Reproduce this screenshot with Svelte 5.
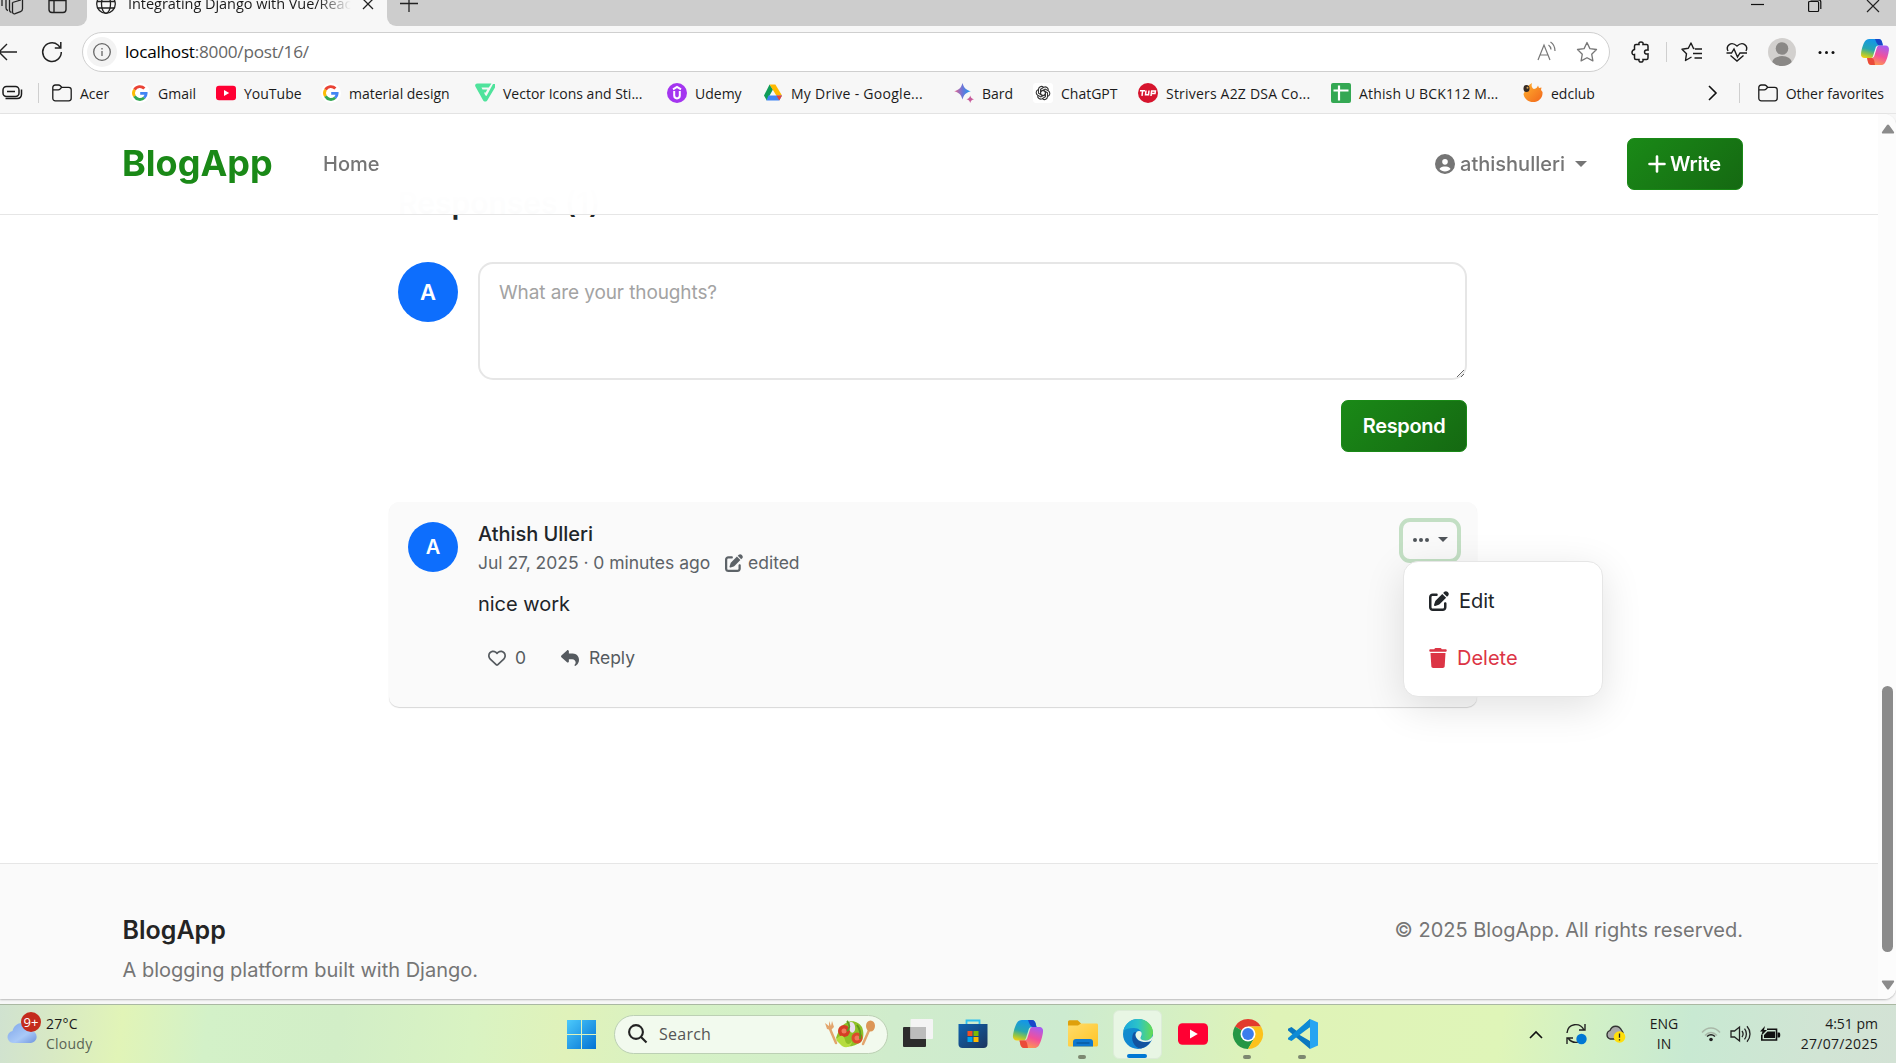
<script>
  const bookmarks = [
    { icon: 'folder', label: 'Acer', width: 78 },
    { icon: 'google', label: 'Gmail', width: 86 },
    { icon: 'youtube', label: 'YouTube', width: 105 },
    { icon: 'google', label: 'material design', width: 154 },
    { icon: 'vector', label: 'Vector Icons and Sti...', width: 192 },
    { icon: 'udemy', label: 'Udemy', width: 96 },
    { icon: 'drive', label: 'My Drive - Google...', width: 191, spacing: 0.28 },
    { icon: 'bard', label: 'Bard', width: 79 },
    { icon: 'chatgpt', label: 'ChatGPT', width: 105 },
    { icon: 'tuf', label: 'Strivers A2Z DSA Co...', width: 193, spacing: 0.2 },
    { icon: 'sheet', label: 'Athish U BCK112 M...', width: 192, spacing: 0.15 },
    { icon: 'edclub', label: 'edclub', width: 90 }
  ];
  const apps = [
    { icon: 'taskview' },
    { icon: 'store' },
    { icon: 'copilot' },
    { icon: 'explorer', open: true },
    { icon: 'edge', open: true, active: true },
    { icon: 'youtube' },
    { icon: 'chrome', open: true },
    { icon: 'vscode', open: true }
  ];
  let draft = $state('');
</script>

{#snippet glyph(name)}
  {#if name === 'folder'}
    <svg class="g" viewBox="0 0 20 20" fill="none" stroke="#1b1b1b" stroke-width="1.3"><path d="M.8 4.6c0-1.500 1-2.600 2.500-2.600h3.200c.8 0 1.300.3 1.800.8l1.400 1.500h7c1.500 0 2.500 1 2.500 2.500v8.500c0 1.500-1 2.500-2.500 2.500H3.300c-1.500 0-2.500-1-2.500-2.500zM.8 6.800h5.500c.8 0 1.300-.3 1.800-.8l1.600-1.700"/></svg>
  {:else if name === 'google'}
    <svg class="g" viewBox="0 0 20 20"><circle cx="10" cy="10" r="10" fill="#fff"/><g fill="none" stroke-width="2.900"><path d="M4.500 6.700A6.200 6.200 0 0 1 14.400 5.600" stroke="#ea4335"/><path d="M4.500 6.700a6.200 6.200 0 0 0 0 6.600" stroke="#fbbc05"/><path d="M4.500 13.300a6.200 6.200 0 0 0 9.700 1.400" stroke="#34a853"/><path d="M14.200 14.700c1.300-1.200 1.900-2.800 1.900-4.300H10.200" stroke="#4285f4"/></g></svg>
  {:else if name === 'youtube'}
    <svg class="g" viewBox="0 0 20 20"><rect y="2.800" width="20" height="14.400" rx="3" fill="#f03"/><path d="M8 7v6l5.200-3z" fill="#fff"/></svg>
  {:else if name === 'vector'}
    <svg class="g" viewBox="0 0 20 20"><path d="M2.500.5h14l-2.700 4H6.500l1 2h4.800l-1.600 3H9l1.200 2.800 1.300.8L18 1h2v3.500L12.500 17c-1 2-3.500 2-4.600 0L.4 3.500C-.4 2 .5.500 2.500.500z" fill="#4fe39c"/></svg>
  {:else if name === 'udemy'}
    <svg class="g" viewBox="0 0 20 20"><circle cx="10" cy="10" r="10" fill="#a435f0"/><path d="M6 6.300 10 4l4 2.300M7.200 8v4.600a2.800 2.800 0 0 0 5.600 0V8" fill="none" stroke="#fff" stroke-width="2"/></svg>
  {:else if name === 'drive'}
    <svg class="g" viewBox="0 0 20 20"><path d="M6.600 1.600 1 12.400l2.800 5L10 6.600z" fill="#0f9d58"/><path d="M6.600 1.600h5.800l6.600 11h-5.700z" fill="#ffba00"/><path d="M5.500 12.500H19l-2.800 4.900H3.500z" fill="#4285f4"/><path d="m13.300 12.500 3 4.900 2.700-4.900z" fill="#ea4335"/></svg>
  {:else if name === 'bard'}
    <svg class="g" viewBox="0 0 20 20"><defs><linearGradient id="bardFill"><stop offset="0" stop-color="#e8668b"/><stop offset=".5" stop-color="#6b75d8"/><stop offset="1" stop-color="#1d9bf0"/></linearGradient></defs><path d="M8.500 0c1.500 5 3.300 6.800 8.300 8.300-5 1.500-6.800 3.300-8.300 8.300-1.500-5-3.300-6.800-8.300-8.300C5.200 6.800 7 5 8.500 0z" fill="url(#bardFill)"/><path d="M16.200 12.600c.7 2.300 1.500 3.100 3.800 3.700-2.300.7-3.100 1.500-3.800 3.700-.6-2.200-1.400-3-3.700-3.700 2.300-.6 3.100-1.400 3.700-3.700z" fill="#c75a9a"/></svg>
  {:else if name === 'chatgpt'}
    <svg class="g" viewBox="0 0 20 20"><rect width="20" height="20" rx="3" fill="#fff"/><g fill="none" stroke="#333" stroke-width="1.100">{#each [0, 60, 120, 180, 240, 300] as a}<path transform="rotate({a} 10 10)" d="M7.600 11.400V6.200L10.800 4.300c2.200-1.200 4.800.6 4.500 3M7.600 8.600 10 7.200"/>{/each}</g></svg>
  {:else if name === 'tuf'}
    <svg class="g" viewBox="0 0 20 20"><circle cx="10" cy="10" r="10" fill="#d6142d"/><path d="M2 7.800h5M4.600 7.800 4 12.800M8 7.500l-.5 4.200h3l.5-4.200M13 13l.6-5h3.800l-.4 2.500h-3.600" fill="none" stroke="#fff" stroke-width="1.500"/></svg>
  {:else if name === 'sheet'}
    <svg class="g" viewBox="0 0 20 20"><rect width="20" height="20" rx="2" fill="#34a853"/><path d="M2.500 7.500h15M8 2.500v15" stroke="#fff" stroke-width="2.200"/></svg>
  {:else if name === 'edclub'}
    <svg class="g" viewBox="0 0 20 20"><defs><linearGradient id="edFill" y2="1"><stop offset="0" stop-color="#ffb32e"/><stop offset="1" stop-color="#f2661c"/></linearGradient></defs><path d="M2 8C3 4 6 2 9 0c-1 3 0 5 2 6 2.500-.5 3.500-2 4-3.500l1 2.500 2.500-.5-.5 2.500 1.500 2c.5 6-4 10-9.500 10C4.500 19 1 15 .5 11z" fill="url(#edFill)"/><ellipse cx="3.500" cy="5.500" rx="3" ry="3.500" fill="#362b23"/><circle cx="4.500" cy="4.700" r="1" fill="#d5a254"/></svg>
  {:else if name === 'copilot'}
    <svg class="g" viewBox="0 0 30 28"><defs><linearGradient id="copA" x1=".4" x2=".1" y2="1"><stop offset="0" stop-color="#1496e8"/><stop offset=".5" stop-color="#27a7b0"/><stop offset=".75" stop-color="#8dc34a"/><stop offset="1" stop-color="#ffd10a"/></linearGradient><linearGradient id="copB" x1=".7" x2=".3" y2="1"><stop offset="0" stop-color="#a85cf0"/><stop offset=".5" stop-color="#f2509a"/><stop offset="1" stop-color="#ff9f4a"/></linearGradient></defs><path d="M9 0h10c2 0 3 1.500 3.500 3L23.500 7H19c-2 0-3 1-3.500 3L13 18c-.6 2-1.500 2.500-3 2.500H4c-3 0-4.500-2-4-5C.6 10.600 2.500 5 4 2.800 5.200.9 6.500 0 9 0z" fill="url(#copA)"/><path d="M15 0h4c2 0 3 1.500 3.500 3L23.500 7H20c-2.500-.3-3.500-3-5-7z" fill="#1947c9"/><path d="M21 28H11c-2 0-3-1.500-3.500-3L6.500 20.500H11c2 0 3-1 3.500-3L17 9.500c.6-2 1.500-2.500 3-2.500h6c3 0 4.500 2 4 5-.6 5-2.500 10.500-4 13.200-1.200 1.900-2.500 2.800-5 2.800z" fill="url(#copB)"/><path d="M15 28h-4c-2 0-3-1.500-3.500-3L6.500 20.500H11c3-.2 3.500 4 4 7.500z" fill="#ea4a3a"/></svg>
  {:else if name === 'taskview'}
    <svg class="g" viewBox="0 0 30 30"><rect y="8" width="23" height="20" rx="1" fill="#2c2c2c"/><rect x="7.500" y="0" width="22.500" height="20" rx="1" fill="#f4f4f4"/><path d="M7.500 8H23v12H7.500z" fill="#bcbcbc"/></svg>
  {:else if name === 'store'}
    <svg class="g" viewBox="0 0 30 30"><defs><linearGradient id="storeFill" y2="1"><stop offset="0" stop-color="#0f64b0"/><stop offset="1" stop-color="#1c355e"/></linearGradient></defs><path d="M8.500 7V1.500h13V7" fill="none" stroke="#2fc0f0" stroke-width="1.800"/><path d="M.500 5h29v20c0 2.500-1.500 4-4 4h-21c-2.500 0-4-1.500-4-4z" fill="url(#storeFill)"/><path d="M9.500 12h5v5h-5z" fill="#f25022"/><path d="M15.500 12h5v5h-5z" fill="#7fba00"/><path d="M9.500 18h5v5h-5z" fill="#00a4ef"/><path d="M15.500 18h5v5h-5z" fill="#ffb900"/></svg>
  {:else if name === 'explorer'}
    <svg class="g" viewBox="0 0 30 30"><defs><linearGradient id="foldFill" y2="1"><stop offset="0" stop-color="#ffdc6b"/><stop offset="1" stop-color="#ffc425"/></linearGradient></defs><path d="M0 3c0-1 .7-1.700 1.700-1.700h8L13 4.500V10H0z" fill="#dfa00b"/><path d="M0 6.500h10l3-2h15.500c1 0 1.500.6 1.500 1.500v20c0 .9-.6 1.500-1.500 1.500h-27C.6 27.500 0 27 0 26z" fill="url(#foldFill)"/><path d="M5 27.500V23c0-2 1-3 3-3h14c2 0 3 1 3 3v4.500z" fill="#0f78cf"/><path d="M8.500 24h13" stroke="#075294" stroke-width="1.200"/></svg>
  {:else if name === 'edge'}
    <svg class="g" viewBox="0 0 30 30"><defs><linearGradient id="edgeTop"><stop offset="0" stop-color="#1aa7dc"/><stop offset=".5" stop-color="#2cc3c8"/><stop offset="1" stop-color="#66dc50"/></linearGradient><linearGradient id="edgeSide" y2="1"><stop offset="0" stop-color="#1391c8"/><stop offset="1" stop-color="#0d7ddb"/></linearGradient></defs><circle cx="15" cy="15" r="15" fill="url(#edgeSide)"/><path d="M.3 12C2 4.500 8 0 15 0c8.500 0 15 6 15 13.500 0 5-3.500 8-8 8-3 0-4.500-1-4.500-2.200 0-1 1.300-1.500 1.300-4 0-3.300-3-6.300-8-6.300C6 9 2 10 .3 12z" fill="url(#edgeTop)"/><path d="M10.500 14C7 20 11 29 18 29.600 23 28 26 25.500 28 22c-6 2.500-14 1-15.500-5-.5-2 0-3 .5-4-1 0-2 .4-2.500 1z" fill="#12539f"/><path d="M12.500 15.500c.5-2.500 2-3.500 3.500-3.500 2 0 3 1.500 2.700 3.400-.3 1.700-1.200 2.600-1.200 3.900C18 21 20.500 21.600 22.500 21.500 26 21.400 28 20 29.500 17l.5 2-2 3c-6 2.500-15.500.5-15.500-6.500z" fill="#e9f6e6"/></svg>
  {:else if name === 'chrome'}
    <svg class="g" viewBox="0 0 30 30"><path d="M15 15 2 7.500A15 15 0 0 1 28 7.500H15z" fill="#e33b2e"/><path d="M15 15 2 7.500A15 15 0 0 0 15 30l6.500-11.200z" fill="#259745"/><path d="M15 30 21.500 18.800 15 7.500h13A15 15 0 0 1 15 30z" fill="#fcc21b"/><circle cx="15" cy="15" r="7.500" fill="#fff"/><circle cx="15" cy="15" r="5.900" fill="#3b7ded"/></svg>
  {:else if name === 'vscode'}
    <svg class="g" viewBox="0 0 30 30"><path d="M22 0 9.500 12.500 3.500 8 0 9.800v1.600L22 30v-8L10 15 22 8z" fill="#0a78c0"/><path d="M0 19v1.500L3.500 22 22 8V0L0 19z" fill="#0d8bd6"/><path d="M22 0l8 3.500v23L22 30z" fill="#27a4f2"/></svg>
  {/if}
{/snippet}

{#snippet penSquare()}
  <svg class="fa" viewBox="0 0 512 512"><path d="M471.6 21.7c-21.900-21.900-57.300-21.900-79.200 0L362.3 51.700l97.900 97.900 30.100-30.100c21.900-21.900 21.900-57.300 0-79.200L471.600 21.700zm-299.200 220c-6.100 6.100-10.800 13.600-13.500 21.900l-29.600 88.800c-2.900 8.600-.6 18.100 5.800 24.600s15.900 8.700 24.600 5.800l88.800-29.600c8.200-2.700 15.700-7.400 21.900-13.500L437.700 172.300 339.700 74.300 172.400 241.700zM96 64C43 64 0 107 0 160V416c0 53 43 96 96 96H352c53 0 96-43 96-96V320c0-17.700-14.300-32-32-32s-32 14.300-32 32v96c0 17.700-14.300 32-32 32H96c-17.700 0-32-14.300-32-32V160c0-17.700 14.300-32 32-32h96c17.700 0 32-14.300 32-32s-14.300-32-32-32H96z"/></svg>
{/snippet}

<div class="desktop">
  <div class="tabstrip">
    <div class="tab-left">
      <svg width="24" height="20" viewBox="0 0 24 20" fill="none" stroke="#222" stroke-width="1.300"><path d="M12.500 2.500 21 0M12.500 2.500v9c0 2 1 2.700 2.700 2.200l5.300-2c1.300-.5 2-1.300 2-3V0M9.500 0v10c0 1.500.8 2.300 2 2.500M6 0v8c0 1.500.8 2.300 2 2.500M2 0v6"/></svg>
      <svg class="panel-ico" width="20" height="20" viewBox="0 0 20 20" fill="none" stroke="#222" stroke-width="1.400"><path d="M1 0v9.500C1 11.500 2 12.500 4 12.500h11c2 0 3-1 3-3V0M6 0v12.500M1 .5h17"/></svg>
    </div>
    <div class="tab">
      <svg width="20" height="16" viewBox="0 0 20 16" fill="none" stroke="#222" stroke-width="1.300"><circle cx="10" cy="4" r="9.300"/><ellipse cx="10" cy="4" rx="4.500" ry="9.300"/><path d="M1 1.500h18M1.500 8h17"/></svg>
      <span class="tab-title">Integrating Django with Vue/Reac</span>
      <svg width="12" height="16" viewBox="0 0 12 16" stroke="#222" stroke-width="1.300"><path d="m1-1 10 10M11-1 1 9"/></svg>
    </div>
    <div class="tab-right">
      <svg width="18" height="16" viewBox="0 0 18 16" stroke="#222" stroke-width="1.300"><path d="M0 3.500h18M9 0v12"/></svg>
      <div class="window-ctl">
        <svg width="13" height="16" viewBox="0 0 13 16" stroke="#111" stroke-width="1.200"><path d="M0 4.500h13"/></svg>
        <svg width="14" height="16" viewBox="0 0 14 16" fill="none" stroke="#111" stroke-width="1.200"><rect x=".6" y="1.500" width="10" height="10" rx="1"/><path d="M2.500 0h8c1.500 0 2.300.8 2.300 2v7"/></svg>
        <svg width="14" height="16" viewBox="0 0 14 16" stroke="#222" stroke-width="1.200"><path d="m1 0 12 12M13 0 1 12"/></svg>
      </div>
    </div>
  </div>

  <div class="toolbar">
    <svg class="back" width="17" height="20" viewBox="0 0 17 20" fill="none" stroke="#222" stroke-width="1.400"><path d="M17 10H-1M7 2-1 10l8 8"/></svg>
    <svg class="reload" width="22" height="22" viewBox="0 0 22 22" fill="none" stroke="#222" stroke-width="1.500"><path d="M20.300 11A9.300 9.300 0 1 1 17 4l2.500 2.800M19.800 1v6h-6"/></svg>
    <div class="address">
      <span class="info"><svg width="18" height="18" viewBox="0 0 18 18" fill="none" stroke="#666" stroke-width="1.300"><circle cx="9" cy="9" r="8.300"/><path d="M9 8v5M9 5v1.600"/></svg></span>
      <span class="url"><b>localhost</b>:8000/post/16/</span>
      <svg class="read" width="20" height="20" viewBox="0 0 20 20" fill="none" stroke="#777" stroke-width="1.200"><path d="m1 18 6-15 6 15M3 13h8M11.500 3c1.500 1 2.300 2.500 2.500 4.500M13.500 0c3 2 4.500 5 4.500 9"/></svg>
      <svg width="22" height="22" viewBox="0 0 22 22" fill="none" stroke="#777" stroke-width="1.300" stroke-linejoin="round"><path d="m11 1.500 2.900 6.100 6.600.9-4.800 4.700 1.200 6.700L11 16.700l-5.900 3.200 1.200-6.700L1.500 8.500l6.600-.9z"/></svg>
    </div>
    <div class="tools">
      <svg class="puzzle" width="20" height="22" viewBox="0 0 20 22" fill="none" stroke="#1b1b1b" stroke-width="1.500"><path d="M3.500 6V5c0-1 .5-1.500 1.500-1.500h3C7.600 1.800 8.500 1 10 1s2.400.8 2 2.500h3.500c1 0 1.500.5 1.500 1.500v4c-2-.4-3.500.4-3.500 2s1.500 2.400 3.500 2v4c0 1-.5 1.500-1.500 1.500H12c.4 1.700-.5 2.500-2 2.500s-2.400-.8-2-2.500H5c-1 0-1.500-.5-1.500-1.500v-3.500C1.800 14 1 13 1 11.500S1.800 9 3.500 8.500z"/></svg>
      <span class="sep"></span>
      <svg class="favs" width="22" height="22" viewBox="0 0 22 22" fill="none" stroke="#1b1b1b" stroke-width="1.400" stroke-linejoin="round"><path d="M13.500 7.500h-1L10 2 7.300 7.300 1 8.200l4.500 4.500-1 6.800 6-3.500M14 8h7M12 12.500h9M13.500 17H21"/></svg>
      <svg class="heartbeat" width="22" height="20" viewBox="0 0 22 20" fill="none" stroke="#1b1b1b" stroke-width="1.400"><path d="M2 9C-.5 4 5-1.500 11 4c6-5.500 11.500 0 9 5M4.500 13.500 11 19l6.500-5.500M.5 11h5l2.500-4 3.500 8 2.500-4h7"/></svg>
      <svg class="profile" width="28" height="28" viewBox="0 0 28 28"><defs><clipPath id="face"><circle cx="14" cy="14" r="14"/></clipPath></defs><circle cx="14" cy="14" r="14" fill="#d2d0ce"/><g fill="#8a8886" clip-path="url(#face)"><circle cx="14" cy="10.500" r="6.300"/><ellipse cx="14" cy="25" rx="10" ry="7"/></g></svg>
      <svg class="more" width="17" height="5" viewBox="0 0 17 5" fill="#111"><circle cx="2" cy="2.500" r="1.500"/><circle cx="8.500" cy="2.500" r="1.500"/><circle cx="15" cy="2.500" r="1.500"/></svg>
      <span class="cop">{@render glyph('copilot')}</span>
    </div>
  </div>

  <div class="bookmarks">
    <svg class="collections" width="21" height="16" viewBox="0 0 21 16" fill="none" stroke="#1b1b1b" stroke-width="1.500"><rect x="1" y="1.500" width="16" height="10" rx="3.500"/><path d="M5 6.500h8M3.500 13.500H15c3 0 4.500-1.500 4.500-4.500V4.500"/></svg>
    <span class="sep first"></span>
    {#each bookmarks as b}
      <div class="bookmark" style="width:{b.width}px; letter-spacing:{b.spacing ?? 0}px">
        <span class="bico">{@render glyph(b.icon)}</span><span>{b.label}</span>
      </div>
    {/each}
    <div class="others">
      <svg width="9" height="16" viewBox="0 0 9 16" fill="none" stroke="#111" stroke-width="1.600"><path d="m1 1 7 7-7 7"/></svg>
      <span class="sep"></span>
      <span class="bico">{@render glyph('folder')}</span><span class="other-label">Other favorites</span>
    </div>
  </div>

  <div class="viewport">
    <div class="page">
      <header class="navbar">
        <span class="brand">BlogApp</span>
        <span class="home">Home</span>
        <div class="nav-right">
          <svg class="user-ico" viewBox="0 0 512 512"><path d="M399 384.2C376.900 345.800 335.400 320 288 320H224c-47.400 0-88.900 25.800-111 64.200c35.200 39.200 86.200 63.800 143 63.800s107.800-24.700 143-63.800zM0 256a256 256 0 1 1 512 0A256 256 0 1 1 0 256zm256 16a72 72 0 1 0 0-144 72 72 0 1 0 0 144z"/></svg>
          <span class="user">athishulleri</span>
          <i class="caret"></i>
          <button class="btn write"><svg width="18" height="18" viewBox="0 0 18 18" stroke="#fff" stroke-width="2.600" stroke-linecap="round"><path d="M1.500 9h15M9 1.500v15"/></svg>Write</button>
        </div>
      </header>

      <main>
        <h2>Responses (1)</h2>
        <form class="composer">
          <span class="avatar large">A</span>
          <textarea bind:value={draft} placeholder="What are your thoughts?"></textarea>
        </form>
        <div class="submit"><button class="btn respond">Respond</button></div>

        <article class="comment">
          <span class="avatar">A</span>
          <div class="body">
            <div class="name">Athish Ulleri</div>
            <div class="meta"><span class="when">Jul 27, 2025 · 0 minutes ago</span>{@render penSquare()}<span>edited</span></div>
            <p>nice work</p>
            <div class="actions">
              <svg class="fa" viewBox="0 0 512 512"><path d="M225.800 468.200l-2.500-2.300L48.100 303.200C17.400 274.700 0 234.700 0 192.800v-3.300c0-70.400 50-130.800 119.200-144C158.600 37.900 198.900 47 231 69.600c9 6.400 17.400 13.800 25 22.300c4.200-4.800 8.700-9.200 13.500-13.300c3.700-3.200 7.500-6.200 11.500-9C313.100 47 353.400 37.900 392.800 45.400C462 58.600 512 119.100 512 189.500v3.300c0 41.900-17.400 81.900-48.100 110.400L288.700 465.900l-2.500 2.300c-8.200 7.600-19 11.900-30.200 11.900s-22-4.200-30.200-11.900zM239.100 145c-.4-.3-.7-.7-1-1.100l-17.800-20c-23.100-25.900-58-37.700-92-31.200C81.600 101.500 48 142.100 48 189.500v3.300c0 28.500 11.900 55.800 32.800 75.200L256 430.700 431.200 268c20.900-19.400 32.800-46.700 32.800-75.200v-3.300c0-47.300-33.600-88-80.100-96.900c-34-6.500-69 5.400-92 31.200l-18 20.200c-.3.4-.7.7-1 1.100c-4.500 4.500-10.600 7-16.900 7s-12.400-2.500-16.900-7z"/></svg>
              <span class="likes">0</span>
              <svg class="fa" viewBox="0 0 512 512"><path d="M205 34.800c11.500 5.100 19 16.600 19 29.200v64H336c97.200 0 176 78.800 176 176c0 113.300-81.500 163.900-100.200 174.100c-2.500 1.400-5.300 1.900-8.100 1.900c-10.900 0-19.700-8.900-19.700-19.700c0-7.500 4.300-14.400 9.800-19.500c9.400-8.800 22.200-26.400 22.200-56.700c0-53-43-96-96-96H224v64c0 12.600-7.400 24.100-19 29.200s-25 3-34.400-5.400l-160-144C3.900 225.700 0 217.100 0 208s3.900-17.700 10.600-23.800l160-144c9.400-8.500 22.900-10.600 34.400-5.400z"/></svg>
              <span>Reply</span>
            </div>
          </div>
          <div class="options">
            <button class="toggle"><svg width="16" height="4" viewBox="0 0 16 4" fill="#50555a"><circle cx="2" cy="2" r="2"/><circle cx="8" cy="2" r="2"/><circle cx="14" cy="2" r="2"/></svg><i class="caret"></i></button>
            <div class="menu">
              <div class="entry edit">{@render penSquare()}<span>Edit</span></div>
              <div class="entry delete"><svg class="trash" viewBox="0 0 448 512"><path d="M135.200 17.700L128 32H32C14.300 32 0 46.300 0 64S14.300 96 32 96H416c17.700 0 32-14.300 32-32s-14.300-32-32-32H320l-7.200-14.300C307.400 6.800 296.300 0 284.200 0H163.800c-12.100 0-23.200 6.800-28.600 17.700zM416 128H32L53.200 467c1.600 25.300 22.600 45 47.900 45H346.900c25.300 0 46.300-19.700 47.900-45L416 128z"/></svg><span>Delete</span></div>
            </div>
          </div>
        </article>
      </main>

      <footer>
        <div>
          <h5>BlogApp</h5>
          <p>A blogging platform built with Django.</p>
        </div>
        <span class="copyright">© 2025 BlogApp. All rights reserved.</span>
      </footer>
    </div>
    <div class="scrollbar">
      <svg width="12" height="10" viewBox="0 0 12 10" fill="#8b8b8b"><path d="M5 1c.5-.8 1.500-.8 2 0l5 7c.4.800 0 1.500-1 1.500H1C0 9.500-.4 8.800 0 8z"/></svg>
      <div class="thumb"></div>
      <svg width="12" height="10" viewBox="0 0 12 10" fill="#8b8b8b"><path d="M5 9c.5.8 1.500.8 2 0l5-7c.4-.8 0-1.500-1-1.500H1C0 .5-.4 1.200 0 2z"/></svg>
    </div>
  </div>

  <div class="taskbar">
    <div class="weather">
      <div class="cloud">
        <svg width="30" height="22" viewBox="0 0 30 22"><defs><linearGradient id="cloudFill" y2="1"><stop offset="0" stop-color="#7ea6ea"/><stop offset=".6" stop-color="#a9c9f7"/><stop offset="1" stop-color="#6f95de"/></linearGradient></defs><path d="M6 21a6 6 0 0 1-.5-11.900C6.500 4 10.500 1 15 1c5 0 8.500 3 9.300 7.500A6.300 6.300 0 0 1 24 21z" fill="url(#cloudFill)"/></svg>
        <span class="badge">9+</span>
      </div>
      <div class="forecast"><span>27°C</span><span class="dim">Cloudy</span></div>
    </div>
    <div class="center">
      <svg class="start" width="29" height="29" viewBox="0 0 29 29"><defs><linearGradient id="winFill" x2="1" y2="1"><stop offset="0" stop-color="#4cc9fb"/><stop offset="1" stop-color="#0272d4"/></linearGradient></defs><path d="M0 0h14v14H0zM15 0h14v14H15zM0 15h14v14H0zM15 15h14v14H15z" fill="url(#winFill)"/></svg>
      <div class="search">
        <svg width="20" height="20" viewBox="0 0 20 20" fill="none" stroke="#222" stroke-width="2.100"><circle cx="8" cy="8" r="6.900"/><path d="m13 13 5.500 5.500"/></svg>
        <span>Search</span>
        <svg class="salad" width="52" height="28" viewBox="0 0 52 28"><g stroke="#e3a56c" stroke-width="2.500" stroke-linecap="round"><path d="m6 9 6 14M46 8l-7 16"/></g><path d="M1 3l2 6 4 1 3-3-2-6-1 5-2-5v5z" fill="#e3a56c"/><ellipse cx="46.500" cy="6" rx="4.500" ry="5.500" fill="#dc9656"/><path d="M12 18c2-5 4-12 10-15 6-4 13-1 16 4 2 5 2 11-1 15-7 5-17 7-22 0z" fill="#8fc027"/><circle cx="20" cy="11" r="6" fill="#d53d25"/><circle cx="33" cy="18" r="5.500" fill="#dc4a2b"/><circle cx="20" cy="11" r="2.500" fill="#f07a5c"/><circle cx="33" cy="18" r="2.500" fill="#f07a5c"/><path d="M24 4c4-5 8 0 7 6-2 5-6 3-7-6z" fill="#e9dff0"/><path d="M12 20c4-6 8-5 9 0s5 5 7 1c0 5-5 8-10 5z" fill="#b5dc3e"/><path d="M23 1c3 3 3 8 0 10M33 5c3 4 4 9 3 14" stroke="#5f9a1b" stroke-width="2" fill="none"/></svg>
      </div>
      {#each apps as app}
        <div class="app" class:active={app.active}>
          <span class="app-ico">{@render glyph(app.icon)}</span>
          {#if app.open}<i class="running"></i>{/if}
        </div>
      {/each}
    </div>
    <div class="tray">
      <svg class="up" width="14" height="9" viewBox="0 0 14 9" fill="none" stroke="#111" stroke-width="1.600"><path d="m1 8 6-6 6 6"/></svg>
      <svg class="sync" width="21" height="22" viewBox="0 0 21 22" fill="none" stroke="#222" stroke-width="1.400"><path d="M1 10C2 0 14-1 18 7M19 1v6h-6M18 14c-3 7-12 7-16 1M1 21v-6h6"/><circle cx="15.500" cy="16" r="5.200" fill="#0078d4" stroke="none"/></svg>
      <svg class="onedrive" width="21" height="20" viewBox="0 0 21 20"><path d="M5 15A4.500 4.500 0 0 1 5 6.500C7 1 14 .5 17 7c3 4 0 8-3 8z" fill="#aaa" stroke="#333" stroke-width="1.300"/><circle cx="14.500" cy="13" r="5.800" fill="#ffdf0a"/><path d="M14.500 9.500v4.200M14.500 15.300v1.300" stroke="#222" stroke-width="1.300"/></svg>
      <div class="lang"><span>ENG</span><span>IN</span></div>
      <svg class="wifi" width="20" height="16" viewBox="0 0 20 16" fill="none" stroke-width="1.500"><path d="M1 6.500C6 .500 14 .500 19 6.500M4 9.500c4-4 8-4 12 0" stroke="#a9b8a8"/><path d="M6 10.500c3-2.500 5-2.500 8 0" stroke="#222"/><circle cx="10" cy="13.500" r="1.800" fill="#222"/></svg>
      <svg class="sound" width="21" height="18" viewBox="0 0 21 18" fill="none" stroke="#222" stroke-width="1.300"><path d="M1 6v6h3.500l5 4V2l-5 4zM12 6c1.300 1.800 1.300 4.200 0 6M14.500 3.700c2.500 3 2.500 7.600 0 10.600M17 1.200c4 4.500 4 11.100 0 15.600"/></svg>
      <svg class="battery" width="21" height="17" viewBox="0 0 21 17"><path d="M7 3.300h9.500V14H1.800V9" fill="none" stroke="#111" stroke-width="1.600"/><path d="M4 9 7.500 5.500H15V12H4zM17.500 6.500h2c1 1 1 4 0 5h-2z" fill="#111"/><path d="M5 0 0 5.500h2.500L1 10 7 4H4z" fill="#111"/></svg>
      <div class="clock"><span>4:51 pm</span><span class="date">27/07/2025</span></div>
    </div>
  </div>
</div>

<style>
  :global(body) { overflow: hidden; }
  .desktop { width: 1896px; height: 1063px; display: flex; flex-direction: column; overflow: hidden; background: #f7f7f7; color: #1b1b1b; font-family: "Open Sans", "Noto Sans", sans-serif; font-size: 14px; }
  .desktop * { box-sizing: border-box; }
  svg { display: block; flex: none; overflow: visible; }
  .g { width: 100%; height: 100%; }
  button { font: inherit; border: 0; padding: 0; }

  .tabstrip { display: flex; height: 26px; overflow: hidden; background: #f7f7f7; flex: none; }
  .tab-left { width: 87px; background: #cdcdcd; border-bottom-right-radius: 9px; display: flex; }
  .panel-ico { margin-left: 24px; }
  .tab { width: 300px; display: flex; padding-left: 9px; }
  .tab-title { width: 223px; margin: -7px 12px 0 12px; height: 24px; line-height: 22px; font-size: 14.500px; letter-spacing: -.04px; white-space: nowrap; overflow: hidden; -webkit-mask-image: linear-gradient(90deg, #000 85%, transparent); mask-image: linear-gradient(90deg, #000 85%, transparent); }
  .tab svg:last-child { margin-left: -1px; }
  .tab-right { flex: 1; background: #cdcdcd; border-bottom-left-radius: 9px; display: flex; justify-content: space-between; padding: 0 16px 0 13px; }
  .window-ctl { display: flex; gap: 44px; }

  .toolbar { height: 52px; flex: none; display: flex; align-items: center; }
  .reload { margin-left: 24px; }
  .address { margin-left: 19px; width: 1528px; height: 40px; border: 1px solid #cfcfcf; border-radius: 20px; background: #fff; display: flex; align-items: center; padding: 0 11px 0 4px; }
  .info { width: 30px; height: 30px; border-radius: 50%; background: #f3f3f3; display: grid; place-items: center; }
  .url { margin: -2px 0 0 8px; font-size: 17.200px; letter-spacing: -.25px; color: #666; flex: 1; }
  .url b { font-weight: 400; color: #000; }
  .read { margin-right: 19px; }
  .tools { display: flex; align-items: center; }
  .puzzle { margin-left: 21px; }
  .sep { width: 1px; height: 20px; background: #cfcfcf; }
  .tools .sep { margin: 0 14px 0 15px; }
  .heartbeat { margin-left: 23px; }
  .profile { margin-left: 20px; }
  .more { margin-left: 22px; }
  .cop { width: 28px; height: 26px; margin-left: 26px; }

  .bookmarks { height: 36px; flex: none; display: flex; align-items: center; padding-bottom: 5px; border-bottom: 1px solid #e6e6e6; white-space: nowrap; }
  .collections { margin-left: 2px; }
  .sep.first { margin: 0 13px 0 15px; }
  .bookmark { display: flex; align-items: center; gap: 8px; }
  .bico { width: 20px; height: 20px; flex: none; }
  .others { margin-left: auto; display: flex; align-items: center; padding-right: 12px; }
  .others .sep { margin: 0 18px 0 22px; }
  .other-label { margin-left: 8px; }

  .viewport { height: 885px; flex: none; display: flex; background: #fff; border-radius: 0 12px 12px 0; overflow: hidden; box-shadow: 0 1px 2px rgba(0, 0, 0, .25); }
  .page { flex: 1; font-family: Inter, sans-serif; font-size: 20px; color: #212529; }
  .scrollbar { width: 18px; background: #fcfcfc; display: flex; flex-direction: column; align-items: center; padding: 10px 0 9px 1px; }
  .thumb { width: 11px; height: 266px; margin: 552px 0 28px; border-radius: 6px; background: #8b8b8b; }

  .navbar { position: relative; z-index: 2; height: 101px; padding: 0 135px 0 122px; border-bottom: 1px solid #e6e6e6; display: flex; align-items: center; background: rgba(255, 255, 255, .98); backdrop-filter: blur(20px); }
  .brand { font-size: 36px; font-weight: 700; color: #1a8917; width: 201px; margin-top: -2px; }
  .home, .user { color: #757575; font-weight: 500; }
  .nav-right { margin-left: auto; display: flex; align-items: center; }
  .user-ico { width: 20px; height: 20px; fill: #757575; margin-right: 5px; }
  .caret { width: 0; height: 0; border: 6px solid transparent; border-top-color: currentColor; border-bottom: 0; }
  .nav-right .caret { color: #757575; margin: 0 40px 0 10px; }
  .btn { height: 52px; padding: 0 21px; border-radius: 7px; border: 1px solid #1a8917; background: linear-gradient(135deg, #1a8917, #156912); color: #fff; font-weight: 600; font-size: 20px; display: flex; align-items: center; }
  .write { width: 116px; gap: 4px; padding-left: 20px; letter-spacing: -.2px; }
  .respond { width: 126px; padding: 0; justify-content: center; letter-spacing: -.35px; }

  main { width: 1088px; margin: -33px 0 0 389px; height: 681px; }
  h2 { margin: 0 0 38px 9px; font-size: 30px; line-height: 42px; font-weight: 600; height: 42px; }
  .composer { display: flex; gap: 20px; padding: 0 10px 0 9px; }
  .avatar { width: 50px; height: 50px; flex: none; border-radius: 50%; background: #0d6efd; color: #fff; font-weight: 600; font-size: 20px; display: grid; place-items: center; }
  .avatar.large { width: 60px; height: 60px; font-size: 22px; }
  textarea { flex: 1; height: 118px; border: 2px solid #e6e6e6; border-radius: 15px; padding: 13px 19px; font: 19px/32px Inter, sans-serif; letter-spacing: -.1px; background: #fff; outline: 0; resize: vertical; display: block; }
  textarea::placeholder { color: #a3a3a3; opacity: 1; }
  .submit { display: flex; justify-content: flex-end; padding: 20px 10px 50px; }
  .comment { position: relative; height: 205px; background: #fafafa; border-radius: 10px; box-shadow: 0 1px 1px rgba(0, 0, 0, .16); display: flex; gap: 20px; padding: 20px 16px 0 19px; }
  .body { flex: 1; letter-spacing: -.03px; }
  .name { font-weight: 500; line-height: 24px; }
  .meta { display: flex; align-items: center; font-size: 17.500px; color: #5d6368; line-height: 34px; }
  .when { margin-right: 15px; }
  .meta .fa { margin-right: 5px; }
  .fa { width: 18px; height: 18px; fill: currentColor; }
  .body p { margin: 7px 0 0; line-height: 34px; }
  .actions { display: flex; align-items: center; margin: 21px 0 0 10px; font-size: 17.500px; line-height: 32px; color: #555a5f; }
  .likes { margin: 0 35px 0 9px; }
  .actions .fa + span:last-child { margin-left: 10px; }
  .options { position: relative; }
  .toggle { width: 62px; height: 45px; margin-top: -4px; border: 4px solid #c3dfc4; border-radius: 11px; background: #fafafa; display: flex; align-items: center; justify-content: center; gap: 9px; padding-bottom: 2px; }
  .toggle .caret { border-width: 5px; border-bottom: 0; color: #50555a; }
  .menu { position: absolute; left: 4px; top: 39px; width: 200px; height: 136px; border: 1px solid #e6e6e6; border-radius: 15px; background: #fff; box-shadow: 0 10px 40px rgba(0, 0, 0, .12); padding: 10px 25px; }
  .entry { height: 57px; display: flex; align-items: center; color: #212529; }
  .entry .fa { width: 20px; height: 20px; margin-right: 10px; }
  .entry.delete { color: #dc3545; }
  .trash { width: 18px; height: 20px; fill: currentColor; margin-right: 10px; }

  footer { height: 136px; margin: 0; background: #fafafa; border-top: 1px solid #e6e6e6; padding: 47px 135px 0 122.500px; display: flex; justify-content: space-between; color: #757575; }
  footer h5 { margin: 0; font-size: 25px; line-height: 38px; font-weight: 600; color: #242424; }
  footer p { margin: 5px 0 0; line-height: 32px; }
  .copyright { line-height: 38px; }

  .taskbar { margin-top: 5px; flex: 1; border-top: 1px solid #aab8a2; display: flex; position: relative; background: linear-gradient(97deg, #d0e2d0 0, #d8e9c4 3%, #e1f4b7 6.500%, #d3f1c8 11%, #d2eec7 18%, #d9f3c2 25%, #e0f2ba 30%, #d5f1c6 37%, #d0eccc 47%, #cdebd0 56%, #d4efc5 61%, #dff3b7 67%, #dff5b8 79%, #d1f0c7 84%, #c8e9d2 89%, #d1e4d4 96%, #d3e2d5 100%); }
  .weather { width: 567px; display: flex; padding-left: 7px; }
  .cloud { position: relative; padding-top: 17px; }
  .badge { position: absolute; left: 14px; top: 7px; width: 20px; height: 20px; border-radius: 50%; background: #c42b1c; color: #fff; font-size: 13px; line-height: 20px; text-align: center; }
  .forecast { margin-left: 9px; display: flex; flex-direction: column; line-height: 20px; padding-top: 9px; letter-spacing: .25px; }
  .dim { color: #5a6455; }
  .center { display: flex; align-items: center; }
  .start { margin-right: 18px; }
  .search { width: 274px; height: 39px; margin-right: 5px; border: 1px solid #bcd0b4; border-radius: 20px; background: #f2faee; display: flex; align-items: center; padding: 0 11px 0 13px; font-size: 16px; color: #555; }
  .search span { margin-left: 11px; flex: 1; letter-spacing: .25px; }
  .app { width: 49px; height: 49px; margin-right: 6px; border-radius: 6px; position: relative; display: grid; place-items: center; }
  .app.active { background: #e8f6e4; border: 1px solid #dcecd8; }
  .app-ico { width: 30px; height: 30px; }
  .running { position: absolute; left: 20px; bottom: 0; width: 8px; height: 4px; border-radius: 2px; background: #7c8870; }
  .active .running { left: 13px; width: 20px; background: #0078d4; }
  .tray { margin-left: auto; display: flex; align-items: center; padding-right: 18px; line-height: 20px; }
  .sync { margin-left: 23px; }
  .onedrive { margin-left: 18px; }
  .lang { width: 40px; margin: 0 17px 0 18px; display: flex; flex-direction: column; align-items: center; }
  .sound { margin-left: 9px; }
  .battery { margin-left: 9px; }
  .clock { width: 97px; display: flex; flex-direction: column; align-items: flex-end; }
  .date { letter-spacing: .3px; }
</style>
